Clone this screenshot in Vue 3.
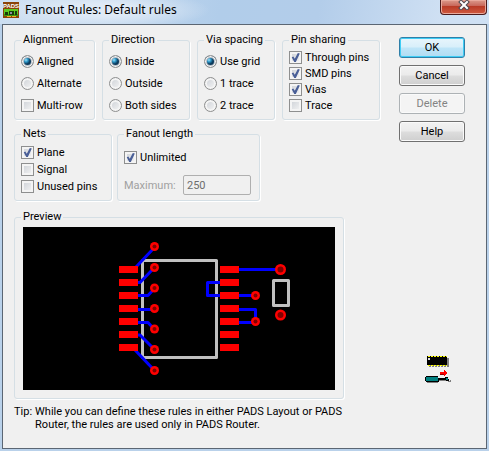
<script setup>
import { reactive, ref } from 'vue'

const radioGroups = reactive([
  { name: 'direction', title: 'Direction', options: ['Inside', 'Outside', 'Both sides'], value: 'Inside' },
  { name: 'spacing', title: 'Via spacing', options: ['Use grid', '1 trace', '2 trace'], value: 'Use grid' },
])
const alignment = ref('Aligned')
const multiRow = ref(false)
const sharing = reactive([
  { label: 'Through pins', on: true },
  { label: 'SMD pins', on: true },
  { label: 'Vias', on: true },
  { label: 'Trace', on: false },
])
const nets = reactive([
  { label: 'Plane', on: true },
  { label: 'Signal', on: false },
  { label: 'Unused pins', on: false },
])
const unlimited = ref(true)
const maximum = ref('250')

const padRows = [266, 279, 292, 305, 318, 331, 344]
const vias = [
  [154.5, 246.5, 4.5], [154.5, 267.5, 4.5], [154.5, 288, 4.5], [154.5, 308.5, 4.5],
  [154.5, 329, 4.5], [154.5, 349.5, 4.5], [154.5, 370.5, 4.5],
  [255.5, 295.5, 4.5], [255.5, 321.5, 4.5], [280.5, 269.5, 5.5], [280.5, 315, 5.5],
]
const traces = [
  'M136 267L154 248', 'M138 282.5H140L154 268', 'M138 295.5H148L154 289', 'M138 309.5H154',
  'M138 322.5H148L154 329', 'M138 335H140L154 349', 'M135 350L154 370',
  'M239 269.5H280', 'M221 282.5H207.5V295.5H221', 'M239 295.5H255',
  'M239 309.5H255.5V321', 'M239 322.5H255',
]
</script>

<template>
  <div class="window">
    <header class="titlebar">
      <svg class="app-icon" viewBox="0 0 16 16" aria-hidden="true">
        <rect width="16" height="16" fill="#8a4408" />
        <rect x="1" y="7" width="14" height="7" fill="#5ccc20" />
        <rect x="1" y="12" width="14" height="2" fill="#3a9a14" />
        <rect x="2" y="10" width="3" height="3" fill="#173d0a" />
        <rect x="6" y="9" width="5" height="4" fill="#173d0a" />
        <rect x="7" y="10" width="2" height="2" fill="#8a8f9a" />
        <rect x="12" y="9" width="2" height="4" fill="#173d0a" />
        <path d="M4 14.500H8M9 14.500H13" stroke="#f8b020" />
        <text x="8" y="6" text-anchor="middle" class="app-icon-text">PADS</text>
      </svg>
      <h1>Fanout Rules: Default rules</h1>
      <button class="close" type="button" aria-label="Close">
        <svg viewBox="0 0 12 10" aria-hidden="true">
          <path d="M3 2L9 8M9 2L3 8" stroke="#4d4850" stroke-width="4" stroke-linecap="square" />
          <path d="M3 2L9 8M9 2L3 8" stroke="#fff" stroke-width="2" stroke-linecap="square" />
        </svg>
      </button>
    </header>

    <form class="client" @submit.prevent>
      <main class="main">
        <div class="row top">
          <fieldset>
            <legend>Alignment</legend>
            <div class="options">
              <label v-for="o in ['Aligned', 'Alternate']" :key="o">
                <input v-model="alignment" type="radio" name="alignment" :value="o" />{{ o }}
              </label>
              <label><input v-model="multiRow" type="checkbox" />Multi-row</label>
            </div>
          </fieldset>
          <fieldset v-for="g in radioGroups" :key="g.name">
            <legend>{{ g.title }}</legend>
            <div class="options">
              <label v-for="o in g.options" :key="o">
                <input v-model="g.value" type="radio" :name="g.name" :value="o" />{{ o }}
              </label>
            </div>
          </fieldset>
          <fieldset>
            <legend>Pin sharing</legend>
            <div class="options dense">
              <label v-for="s in sharing" :key="s.label"><input v-model="s.on" type="checkbox" />{{ s.label }}</label>
            </div>
          </fieldset>
        </div>

        <div class="row middle">
          <fieldset>
            <legend>Nets</legend>
            <div class="options nets">
              <label v-for="n in nets" :key="n.label"><input v-model="n.on" type="checkbox" />{{ n.label }}</label>
            </div>
          </fieldset>
          <fieldset>
            <legend>Fanout length</legend>
            <div class="options length">
              <label><input v-model="unlimited" type="checkbox" />Unlimited</label>
              <div class="field">
                <label for="maximum">Maximum:</label>
                <input id="maximum" v-model="maximum" type="text" :disabled="unlimited" />
              </div>
            </div>
          </fieldset>
        </div>

        <fieldset class="preview">
          <legend>Preview</legend>
          <svg class="board" viewBox="23 227 312 163" role="img" aria-label="Preview">
            <g fill="none" stroke="#c0c0c0" stroke-width="3" stroke-linejoin="round">
              <rect x="142.500" y="260.500" width="74" height="97" />
              <rect x="273.500" y="280.500" width="15" height="25" />
            </g>
            <g fill="none" stroke="#00f" stroke-width="3" stroke-linejoin="round">
              <path v-for="t in traces" :key="t" :d="t" />
            </g>
            <g fill="#f00" shape-rendering="crispEdges">
              <template v-for="y in padRows" :key="y">
                <rect x="119" :y="y" width="19" height="7" />
                <rect x="220" :y="y" width="19" height="7" />
              </template>
            </g>
            <g v-for="([x, y, r], i) in vias" :key="i">
              <circle :cx="x" :cy="y" :r="r" fill="#f00" />
              <circle :cx="x" :cy="y" :r="r - 2.5" fill="#800000" />
            </g>
          </svg>
        </fieldset>

        <p class="tip">
          <span>Tip:</span>
          <span>While you can define these rules in either PADS Layout or PADS Router, the rules are used only in PADS Router.</span>
        </p>
      </main>

      <aside class="side">
        <button class="default" type="submit">OK</button>
        <button type="button">Cancel</button>
        <button type="button" disabled>Delete</button>
        <button type="button">Help</button>
        <svg class="tool" viewBox="0 0 26 28" shape-rendering="crispEdges" aria-hidden="true">
          <rect x="4" y="3" width="20" height="8" fill="#808080" />
          <path d="M4 11.500H24" stroke="#808080" stroke-dasharray="2 1" />
          <rect x="2" y="1" width="20" height="9" fill="#000" />
          <path d="M3 1.500H22M3 10.500H22" stroke="#ff0" stroke-dasharray="2 1" />
          <rect x="3" y="3" width="2" height="2" fill="#ddd" />
          <path d="M15 17H19V15L22 18L19 21V19H15Z" fill="#f00" />
          <path d="M15 19.500H19" stroke="#900000" />
          <path d="M2 27.500H13M14 25.500H21M23 26.500H25V25" fill="none" stroke="#808080" />
          <path d="M1 21H13V23H20V22H23V24H24V26H21V25H14V27H1V26H0V22H1Z" fill="#000" />
          <rect x="1" y="22" width="12" height="4" fill="#008080" />
          <rect x="21" y="23" width="2" height="2" fill="#008080" />
        </svg>
      </aside>
    </form>
  </div>
</template>

<style>
body {
  margin: 0;
}
</style>

<style scoped>
.window {
  box-sizing: border-box;
  min-height: 100vh;
  padding: 0 2px 2px;
  display: flex;
  flex-direction: column;
  background: #b9d1ea;
  color: #000;
  font: 11px/13px Roboto, "Liberation Sans", Arial, sans-serif;
}
.titlebar {
  display: flex;
  align-items: flex-start;
  height: 24px;
  margin: 0 -2px;
  padding: 0 2px 0 3px;
  background:
    radial-gradient(ellipse 110px 20px at 100px 10px, #dfeaf6 30%, transparent),
    linear-gradient(100deg, #cddff1, #b1cdea 45%, #b3cdea 65%, #cfe0f3 90%);
}
.app-icon {
  width: 16px;
  height: 16px;
  margin-top: 2px;
}
.app-icon-text {
  font: bold 6px "Liberation Sans", Arial, sans-serif;
  fill: #fff;
}
h1 {
  margin: 0 0 0 6px;
  flex: 1;
  font: 12px/19px "Noto Sans", "Open Sans", sans-serif;
}
.close {
  display: flex;
  justify-content: center;
  width: 47px;
  height: 15px;
  padding: 0;
  border: 1px solid #4a1a1c;
  border-top: 0;
  border-radius: 0 0 4px 4px;
  background: linear-gradient(#dc9a8c, #c9695c 40%, #b93a26 45%, #d05a40);
  box-shadow: inset 0 0 0 1px #e9a99c;
}
.close svg {
  width: 12px;
  height: 10px;
}
.client {
  flex: 1;
  display: flex;
  gap: 19px;
  padding: 9px 21px 16px 11px;
  border: 1px solid #5b6673;
  background: #f0f0f0;
}
.main {
  flex: 1;
  min-width: 0;
}
.row {
  display: grid;
}
.top {
  grid-template-columns: 81fr 88fr 78fr 98fr;
  gap: 7px;
}
.middle {
  grid-template-columns: 98fr 143fr 115fr;
  gap: 5px;
  margin: 8px 0 10px;
}
fieldset {
  min-width: 0;
  margin: 0;
  padding: 0 6px 7px;
  border: 1px solid #d5dfe5;
  border-radius: 3px;
  box-shadow: 1px 1px 0 #fff;
}
.middle fieldset {
  padding-bottom: 5px;
}
legend {
  height: 12px;
  line-height: 12px;
  padding: 0 2px;
}
.options {
  display: flex;
  flex-direction: column;
  gap: 9px;
  padding-top: 9px;
}
.dense {
  gap: 3px;
  padding-top: 5px;
}
.nets {
  gap: 4px;
  padding-top: 6px;
}
.length {
  gap: 11px;
  padding-top: 11px;
}
.options label {
  display: flex;
  align-items: center;
  gap: 3px;
  height: 13px;
  white-space: nowrap;
}
input[type="radio"],
input[type="checkbox"] {
  appearance: none;
  box-sizing: border-box;
  flex: none;
  position: relative;
  width: 13px;
  height: 13px;
  margin: 0;
  border: 1px solid #8e8f8f;
  background: linear-gradient(135deg, #cbcfd5, #f6f6f6);
  box-shadow: inset 0 0 0 2px #f4f4f4;
}
input[type="radio"] {
  border-radius: 50%;
}
input[type="radio"]:checked {
  background: radial-gradient(circle at 4px 4px, #9fe4fb, #2a93c4 2px, #0c3a5c 4px);
  box-shadow: inset 0 0 0 1px #f4f4f4, inset 0 0 0 2px #b4bcc4;
}
input[type="checkbox"]:checked::after {
  content: "";
  position: absolute;
  inset: 1px;
  background: #4a5f97;
  clip-path: polygon(8% 48%, 26% 40%, 42% 64%, 76% 0, 98% 6%, 54% 100%, 36% 100%);
}
.field {
  display: flex;
  align-items: center;
  justify-content: space-between;
  padding-right: 2px;
}
.field label {
  color: #a0a0a0;
}
#maximum {
  box-sizing: border-box;
  width: 68px;
  height: 20px;
  padding: 0 3px;
  border: 1px solid #afafaf;
  border-radius: 2px;
  background: #f0f0f0;
  color: #6d6d6d;
  font: inherit;
}
.preview {
  margin-right: 36px;
  padding-bottom: 8px;
}
.board {
  display: block;
  box-sizing: border-box;
  width: calc(100% - 4px);
  margin: 4px 2px 0;
  background: #000;
}
.tip {
  display: flex;
  gap: 3px;
  margin: 6px 28px 0 0;
}
.side {
  display: flex;
  flex-direction: column;
  gap: 7px;
  width: 66px;
  padding-top: 3px;
}
.side button {
  box-sizing: border-box;
  height: 21px;
  padding: 0;
  border: 1px solid #707070;
  border-radius: 3px;
  background: linear-gradient(#f2f2f2, #ebebeb 48%, #dddddd 52%, #cfcfcf);
  box-shadow: inset 0 0 0 1px #fafafa;
  color: #000;
  font: inherit;
}
.side .default {
  border-color: #2f7fa8;
  background: linear-gradient(#e8f5fc, #d8effa 48%, #bfe5f8 52%, #b0dcf2);
  box-shadow: inset 0 0 0 1px #3fcdf5;
}
.side button:disabled {
  border-color: #adb2b5;
  background: #f4f4f4;
  color: #838383;
}
.tool {
  align-self: center;
  width: 26px;
  height: 28px;
  margin: auto 0 49px 12px;
}
</style>
